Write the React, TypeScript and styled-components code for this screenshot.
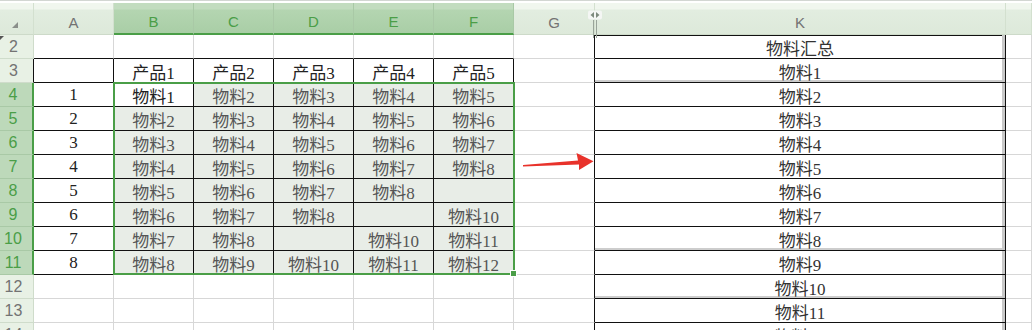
import React from 'react'
import styled, { createGlobalStyle, css } from 'styled-components'

const GlobalStyle = createGlobalStyle`
  html, body {
    margin: 0;
    padding: 0;
    background: #ffffff;
  }
  body {
    width: 1032px;
    height: 330px;
    overflow: hidden;
  }
`

const GREEN = '#4a9e47'

const columns = [
  { name: '', width: 34 },
  { name: 'A', width: 80 },
  { name: 'B', width: 80, selected: true },
  { name: 'C', width: 80, selected: true },
  { name: 'D', width: 80, selected: true },
  { name: 'E', width: 80, selected: true },
  { name: 'F', width: 80, selected: true },
  { name: 'G', width: 81 },
  { name: 'K', width: 411 },
  { name: '', width: 26 },
]

const m = (n: number) => `物料${n}`

// sheet row number -> [A, B, C, D, E, F, G, K]
const rows: { num: number; cells: string[] }[] = [
  { num: 2, cells: ['', '', '', '', '', '', '', '物料汇总'] },
  { num: 3, cells: ['', '产品1', '产品2', '产品3', '产品4', '产品5', '', m(1)] },
  { num: 4, cells: ['1', m(1), m(2), m(3), m(4), m(5), '', m(2)] },
  { num: 5, cells: ['2', m(2), m(3), m(4), m(5), m(6), '', m(3)] },
  { num: 6, cells: ['3', m(3), m(4), m(5), m(6), m(7), '', m(4)] },
  { num: 7, cells: ['4', m(4), m(5), m(6), m(7), m(8), '', m(5)] },
  { num: 8, cells: ['5', m(5), m(6), m(7), m(8), '', '', m(6)] },
  { num: 9, cells: ['6', m(6), m(7), m(8), '', m(10), '', m(7)] },
  { num: 10, cells: ['7', m(7), m(8), '', m(10), m(11), '', m(8)] },
  { num: 11, cells: ['8', m(8), m(9), m(10), m(11), m(12), '', m(9)] },
  { num: 12, cells: ['', '', '', '', '', '', '', m(10)] },
  { num: 13, cells: ['', '', '', '', '', '', '', m(11)] },
  { num: 14, cells: ['', '', '', '', '', '', '', m(12)] },
]

const greyBottomRows = [3, 10, 12]

const Page = styled.div`
  width: 1032px;
  height: 330px;
  overflow: hidden;
  background: #ffffff;
`

const TopStrip = styled.div`
  height: 3px;
  background: #ffffff;
  border-top: 1px solid #d2d6d2;
  box-sizing: border-box;
`

const Sheet = styled.div`
  display: grid;
  grid-template-columns: ${columns.map((c) => `${c.width}px`).join(' ')};
  grid-template-rows: 32px repeat(13, 24px);
`

const Placed = css<{ $row: number; $col: number }>`
  grid-row: ${(p) => p.$row};
  grid-column: ${(p) => p.$col};
  box-sizing: border-box;
  min-width: 0;
`

const ColHead = styled.div<{ $row: number; $col: number; $selected?: boolean }>`
  ${Placed};
  position: relative;
  display: flex;
  align-items: center;
  justify-content: center;
  padding-top: 7px;
  font-family: 'Liberation Sans', Arial, sans-serif;
  font-size: 15px;
  color: #737373;
  background: linear-gradient(#f0f6ee 0, #f0f6ee 6px, #e2ede0 7px, #dde9da);
  border-right: 1px solid #d3e0cf;
  border-bottom: 1px solid #cddac9;

  ${(p) =>
    p.$selected &&
    css`
      color: ${GREEN};
      background: linear-gradient(#c2dcbf 0, #c2dcbf 6px, #b4d5b1 7px, #a9cea6);
      border-right-color: #a9c9a6;
      border-bottom: 2px solid ${GREEN};
    `}
`

const CornerMark = styled.span`
  position: absolute;
  left: 12px;
  top: 19px;
  width: 0;
  height: 0;
  border-left: 6px solid transparent;
  border-bottom: 6px solid #8a8f8a;
`

const HiddenColMark = styled.svg`
  position: absolute;
  left: -8px;
  top: 7px;
`

const RowHead = styled.div<{ $row: number; $col: number; $selected?: boolean; $edge?: string }>`
  ${Placed};
  position: relative;
  display: flex;
  align-items: center;
  justify-content: center;
  padding-right: 6px;
  font-family: 'Liberation Sans', Arial, sans-serif;
  font-size: 16px;
  color: #737373;
  background: #e8f1e5;
  border-bottom: 1px solid #cfdccb;
  border-right: 1px solid ${(p) => p.$edge || '#cfdccb'};

  ${(p) =>
    p.$selected &&
    css`
      color: ${GREEN};
      background: #bdd9ba;
      border-bottom-color: #a9c9a6;
      border-right: 2px solid ${GREEN};
    `}
`

const HiddenRowMark = styled.span`
  position: absolute;
  left: 0;
  top: 1px;
  width: 0;
  height: 0;
  border-top: 4px solid #555;
  border-right: 4px solid transparent;
`

const Cell = styled.div<{
  $row: number
  $col: number
  $shaded?: boolean
  $right?: string
  $bottom?: string
  $framed?: boolean
  $topLine?: boolean
  $greyBottom?: boolean
}>`
  ${Placed};
  display: flex;
  align-items: center;
  justify-content: center;
  padding-top: 1px;
  white-space: nowrap;
  font-family: 'Liberation Serif', 'Noto Sans CJK SC', serif;
  font-size: 17px;
  color: ${(p) => (p.$shaded ? '#555555' : '#222222')};
  background: ${(p) => (p.$shaded ? '#e8ede7' : '#ffffff')};
  border-right: 1px solid ${(p) => p.$right || '#d7d7d7'};
  border-bottom: 1px solid ${(p) => p.$bottom || '#d7d7d7'};

  ${(p) =>
    p.$framed &&
    css`
      color: #333333;
      box-shadow: ${[
        'inset -3px 0 0 #c9c9c9',
        p.$topLine ? 'inset 0 1px 0 #111' : '',
        p.$greyBottom ? 'inset 0 -2px 0 #cdcdcd' : '',
      ]
        .filter(Boolean)
        .join(', ')};
    `}
`

const SelectionFrame = styled.div`
  grid-column: 3 / 8;
  grid-row: 4 / 12;
  margin: -1px -1px 0 -1px;
  border: 2px solid ${GREEN};
  position: relative;
  pointer-events: none;
  z-index: 2;
`

const FillHandle = styled.span`
  position: absolute;
  right: -4px;
  bottom: -4px;
  width: 5px;
  height: 5px;
  background: ${GREEN};
  border: 1px solid #ffffff;
`

const Arrow = styled.svg`
  grid-column: 8;
  grid-row: 6 / 9;
  z-index: 3;
  overflow: visible;
`

const App = () => {
  const inTable = (num: number, col: number) => num >= 3 && num <= 11 && col >= 2 && col <= 7

  return (
    <Page>
      <GlobalStyle />
      <TopStrip />
      <Sheet>
        {columns.map((c, i) => (
          <ColHead key={`h${i}`} $row={1} $col={i + 1} $selected={c.selected}>
            {i === 0 && <CornerMark />}
            {c.name}
            {c.name === 'K' && (
              <HiddenColMark width="16" height="28" viewBox="0 0 16 28">
                <rect x="1" y="0.5" width="14" height="9" rx="2" fill="#f4f6f4" />
                <path d="M7 2 L3.5 5 L7 8 Z" fill="#7d8a7d" />
                <path d="M9 2 L12.5 5 L9 8 Z" fill="#7d8a7d" />
                <line x1="6.5" y1="10" x2="6.5" y2="28" stroke="#9aa59a" strokeWidth="1" />
                <line x1="9.5" y1="10" x2="9.5" y2="28" stroke="#9aa59a" strokeWidth="1" />
              </HiddenColMark>
            )}
          </ColHead>
        ))}

        {rows.map(({ num, cells }) => {
          const selected = num >= 4 && num <= 11
          return (
            <React.Fragment key={num}>
              <RowHead
                $row={num}
                $col={1}
                $selected={selected}
                $edge={num === 3 ? '#111' : undefined}
              >
                {num === 2 && <HiddenRowMark />}
                {num}
              </RowHead>
              {cells.map((text, i) => {
                const col = i + 2
                const isK = col === 9
                const table = inTable(num, col)
                const aboveTable = num === 2 && col >= 2 && col <= 7
                const shaded = num >= 4 && num <= 11 && col >= 3 && col <= 7 && !(num === 4 && col === 3)
                let right: string | undefined
                let bottom: string | undefined
                if (table) {
                  right = '#111'
                  bottom = '#111'
                }
                if (aboveTable) bottom = '#111'
                if (col === 8) right = '#111'
                if (isK) {
                  right = '#111'
                  bottom = '#111'
                }
                return (
                  <Cell
                    key={col}
                    $row={num}
                    $col={col}
                    $shaded={shaded}
                    $right={right}
                    $bottom={bottom}
                    $framed={isK}
                    $topLine={isK && num === 2}
                    $greyBottom={isK && greyBottomRows.includes(num)}
                  >
                    {text}
                  </Cell>
                )
              })}
              <Cell $row={num} $col={10} />
            </React.Fragment>
          )
        })}

        <SelectionFrame>
          <FillHandle />
        </SelectionFrame>

        <Arrow width="81" height="72" viewBox="0 0 81 72">
          <polygon
            points="9,34 64,29.4 62.5,22 79.5,30.2 65,39 65,33.4 9,35.4"
            fill="#e8322b"
          />
        </Arrow>
      </Sheet>
    </Page>
  )
}

export default App
